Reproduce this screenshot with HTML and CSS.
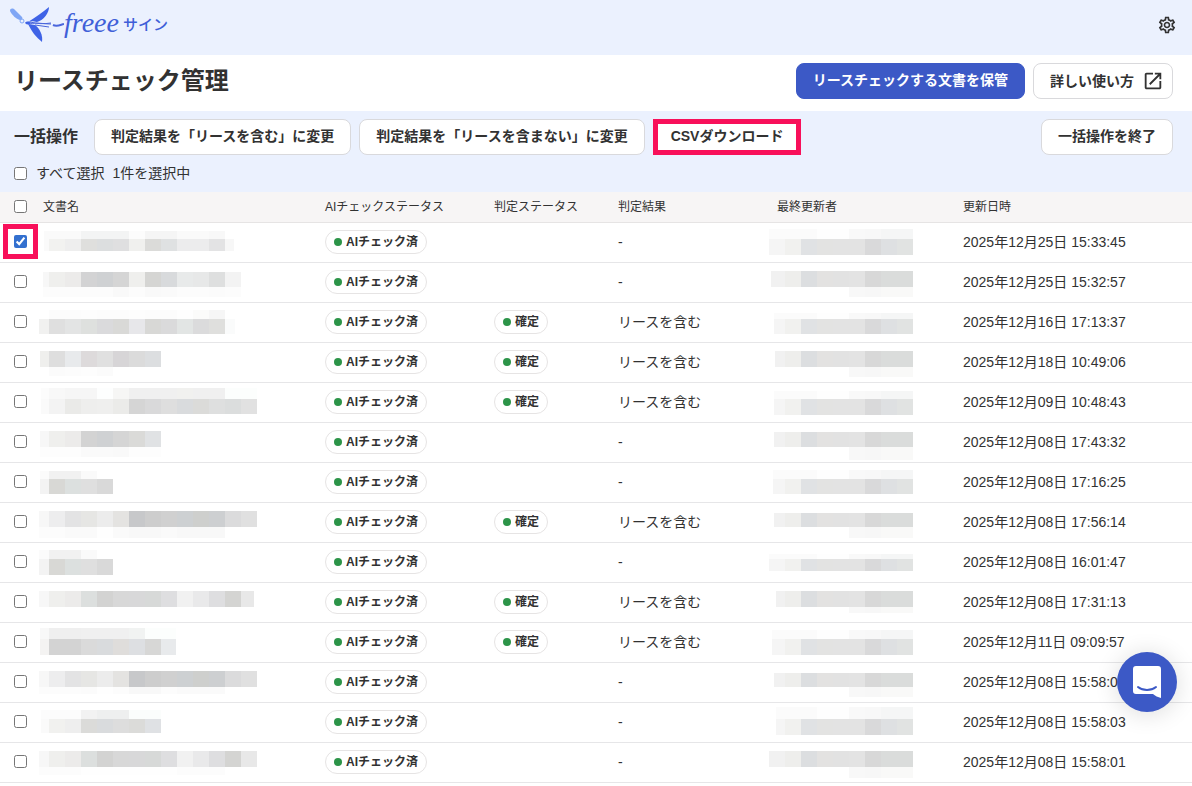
FILE: index.html
```html
<!DOCTYPE html>
<html lang="ja">

<head>
	<meta charset="UTF-8">
	<meta name="viewport" content="width=device-width, initial-scale=1.0">
	<title>リースチェック管理</title>
	<link rel="stylesheet" href="styles.css">
</head>

<body>

	<header class="topbar">
		<a class="logo" href="#">
			<svg class="logo-bird" viewBox="0 0 54 36" aria-hidden="true">
				<path d="M0 4C0 1 3 1 5 3L12 10C13 11 12 13 10 13C6 12 2 8 0 4Z" fill="#7fa6f5" />
				<circle cx="12" cy="14" r="2" fill="none" stroke="#7fa6f5" />
				<path d="M18 15C26 10 33 5 39 0 39 6 34 13 27 15 23 14 21 14 18 15Z" fill="#3f63e6" />
				<path d="M18 17C22 25 26 30 32 35 33 28 30 22 25 18Z" fill="#3f63e6" />
				<path d="M15 16C16 14 19 14 21 16 19 18 17 18 15 16Z" fill="#3f63e6" />
				<path d="M20 15C28 17 34 17 41 16M20 17C26 15 33 17 41 17M25 18L39 20" fill="none" stroke="#4a66dc" />
				<path d="M43 18C47 20 50 18 54 17" fill="none" stroke="#4a66dc" stroke-width="2" />
			</svg>
			<span class="logo-name">freee</span>
			<span class="logo-product">サイン</span>
		</a>
		<button class="icon-button" type="button" aria-label="設定">
			<svg width="20" height="20" viewBox="0 0 24 24" fill="currentColor">
				<path d="M19.43 12.98c.04-.32.07-.64.07-.98 0-.34-.03-.66-.07-.98l2.11-1.65c.19-.15.24-.42.12-.64l-2-3.46c-.09-.16-.26-.25-.44-.25-.06 0-.12.01-.17.03l-2.49 1c-.52-.4-1.08-.73-1.69-.98l-.38-2.65C14.46 2.18 14.25 2 14 2h-4c-.25 0-.46.18-.49.42l-.38 2.65c-.61.25-1.17.59-1.69.98l-2.49-1c-.06-.02-.12-.03-.18-.03-.17 0-.34.09-.43.25l-2 3.46c-.13.22-.07.49.12.64l2.11 1.65c-.04.32-.07.65-.07.98 0 .33.03.66.07.98l-2.11 1.65c-.19.15-.24.42-.12.64l2 3.46c.09.16.26.25.44.25.06 0 .12-.01.17-.03l2.49-1c.52.4 1.08.73 1.69.98l.38 2.65c.03.24.24.42.49.42h4c.25 0 .46-.18.49-.42l.38-2.65c.61-.25 1.17-.59 1.69-.98l2.49 1c.06.02.12.03.18.03.17 0 .34-.09.43-.25l2-3.46c.12-.22.07-.49-.12-.64l-2.11-1.65zm-1.98-1.71c.04.31.05.52.05.73 0 .21-.02.43-.05.73l-.14 1.13.89.7 1.08.84-.7 1.21-1.27-.51-1.04-.42-.9.68c-.43.32-.84.56-1.25.73l-1.06.43-.16 1.13-.2 1.35h-1.4l-.19-1.35-.16-1.13-1.06-.43c-.43-.18-.83-.41-1.23-.71l-.91-.7-1.06.43-1.27.51-.7-1.21 1.08-.84.89-.7-.14-1.13c-.03-.31-.05-.54-.05-.74s.02-.43.05-.73l.14-1.13-.89-.7-1.08-.84.7-1.21 1.27.51 1.04.42.9-.68c.43-.32.84-.56 1.25-.73l1.06-.43.16-1.13.2-1.35h1.39l.19 1.35.16 1.13 1.06.43c.43.18.83.41 1.23.71l.91.7 1.06-.43 1.27-.51.7 1.21-1.07.85-.89.7.14 1.13zM12 8c-2.21 0-4 1.79-4 4s1.79 4 4 4 4-1.79 4-4-1.79-4-4-4zm0 6c-1.1 0-2-.9-2-2s.9-2 2-2 2 .9 2 2-.9 2-2 2z" />
			</svg>
		</button>
	</header>

	<main>
		<div class="page-head">
			<h1 class="page-title">リースチェック管理</h1>
			<div class="page-actions">
				<button class="button button-primary" type="button">リースチェックする文書を保管</button>
				<a class="button button-link" href="#">詳しい使い方
					<svg width="22" height="22" viewBox="0 0 24 24" fill="currentColor" aria-hidden="true">
						<path d="M19 19H5V5h7V3H5c-1.11 0-2 .9-2 2v14c0 1.1.89 2 2 2h14c1.1 0 2-.9 2-2v-7h-2v7zM14 3v2h3.59l-9.83 9.83 1.41 1.41L19 6.41V10h2V3h-7z" />
					</svg>
				</a>
			</div>
		</div>

		<section class="bulk">
			<div class="bulk-row">
				<h2 class="bulk-title">一括操作</h2>
				<div class="bulk-actions">
					<button class="button" type="button">判定結果を「リースを含む」に変更</button>
					<button class="button" type="button">判定結果を「リースを含まない」に変更</button>
					<button class="button button-marked" type="button">CSVダウンロード</button>
				</div>
				<button class="button" type="button">一括操作を終了</button>
			</div>
			<div class="bulk-select">
				<label class="select-all"><input class="check" type="checkbox">すべて選択</label>
				<span>1件を選択中</span>
			</div>
		</section>

		<table class="docs">
			<colgroup>
				<col class="col-check">
				<col class="col-name">
				<col class="col-ai">
				<col class="col-status">
				<col class="col-result">
				<col class="col-user">
				<col>
			</colgroup>
			<thead>
				<tr>
					<th class="cell-check"><input class="check" type="checkbox" aria-label="すべての行を選択"></th>
					<th>文書名</th>
					<th>AIチェックステータス</th>
					<th>判定ステータス</th>
					<th>判定結果</th>
					<th>最終更新者</th>
					<th>更新日時</th>
				</tr>
			</thead>
			<tbody id="docs-body"></tbody>
		</table>
	</main>

	<button class="chat" type="button" aria-label="チャットを開く">
		<svg width="28" height="32" viewBox="0 0 28 32" aria-hidden="true">
			<path d="M3 0h22a3 3 0 0 1 3 3v29c-3-1-6-2-8-4H3a3 3 0 0 1-3-3V3a3 3 0 0 1 3-3z" fill="#fff" />
			<path d="M5 21c5 4 13 4 18 0" fill="none" stroke="#3c59c6" stroke-width="2" stroke-linecap="round" />
		</svg>
	</button>

	<script src="script.js"></script>
</body>

</html>
```

FILE: styles.css
```css
* {
	box-sizing: border-box;
}

body {
	margin: 0;
	background: #fff;
	color: #323232;
	font-family: "Liberation Sans", "Noto Sans CJK JP", sans-serif;
	font-size: 14px;
	line-height: 20px;
}

/* Top bar */
.topbar {
	display: flex;
	align-items: center;
	justify-content: space-between;
	height: 55px;
	padding: 0 15px 6px 10px;
	background: #ebf1fe;
}

.logo {
	display: flex;
	align-items: center;
	color: #3f5fd8;
	text-decoration: none;
}

.logo-bird {
	width: 54px;
	height: 36px;
}

.logo-name {
	padding-bottom: 4px;
	font-family: "Liberation Serif", serif;
	font-size: 28px;
	font-style: italic;
	line-height: 36px;
}

.logo-product {
	margin-left: 4px;
	font-size: 15px;
	font-weight: 500;
}

.icon-button {
	display: flex;
	padding: 0;
	border: 0;
	background: none;
	color: #323232;
}

/* Page heading */
.page-head {
	display: flex;
	align-items: center;
	justify-content: space-between;
	padding: 8px 19px 12px 14px;
}

.page-title {
	margin: 0;
	font-size: 24px;
	line-height: 36px;
}

.page-actions {
	display: flex;
	gap: 8px;
}

.button {
	display: flex;
	align-items: center;
	justify-content: center;
	height: 36px;
	padding: 0 16px 2px;
	border: 1px solid #d9d9dc;
	border-radius: 8px;
	background: #fff;
	color: #323232;
	font-family: inherit;
	font-size: 14px;
	font-weight: bold;
	line-height: 20px;
	text-decoration: none;
	white-space: nowrap;
}

.button-primary {
	border-color: #3c59c6;
	background: #3c59c6;
	color: #fff;
}

.button-link {
	gap: 8px;
	padding: 0 8px 0 16px;
}

.button-marked {
	padding: 0 17px 2px;
	border-radius: 0;
	outline: 5px solid #f8105a;
	outline-offset: -5px;
}

/* Bulk operations */
.bulk {
	padding: 8px 19px 9px 14px;
	background: #ebf1fe;
}

.bulk-row {
	display: flex;
	align-items: center;
	gap: 16px;
}

.bulk-title {
	margin: 0;
	font-size: 16px;
	line-height: 24px;
	white-space: nowrap;
}

.bulk-actions {
	display: flex;
	flex: 1;
	gap: 8px;
}

.bulk-select {
	display: flex;
	gap: 8px;
	margin-top: 8px;
}

.select-all {
	display: flex;
	align-items: center;
	gap: 9px;
}

.check {
	display: block;
	width: 13px;
	height: 13px;
	margin: 0;
	accent-color: #3370cf;
}

/* Document list */
.docs {
	width: 100%;
	border-collapse: separate;
	border-spacing: 0;
	table-layout: fixed;
}

.col-check {
	width: 35px;
}

.col-name {
	width: 282px;
}

.col-ai {
	width: 169px;
}

.col-status {
	width: 124px;
}

.col-result {
	width: 159px;
}

.col-user {
	width: 186px;
}

.docs th {
	height: 31px;
	padding: 0 8px;
	border-bottom: 1px solid #e6e4e4;
	background: #f7f5f5;
	font-size: 12px;
	font-weight: normal;
	text-align: left;
	white-space: nowrap;
}

.docs td {
	height: 40px;
	padding: 0 8px 2px;
	border-bottom: 1px solid #e6e6e8;
	white-space: nowrap;
}

.docs .cell-check {
	padding: 0 0 2px 14px;
}

.docs .cell-masked {
	padding: 0;
}

.mosaic {
	display: block;
	width: 100%;
	height: 39px;
}

.check-wrap {
	display: block;
	position: relative;
	width: 13px;
}

.check-marked::after {
	content: "";
	position: absolute;
	inset: -11px;
	border: 5px solid #f8105a;
	pointer-events: none;
}

.badge {
	display: inline-flex;
	align-items: center;
	gap: 4px;
	height: 24px;
	padding: 0 8px;
	border: 1px solid #e6e4e4;
	border-radius: 12px;
	font-size: 12px;
	font-weight: bold;
	vertical-align: middle;
}

.badge::before {
	content: "";
	width: 8px;
	height: 8px;
	border-radius: 50%;
	background: #2c9448;
}

/* Chat launcher */
.chat {
	display: flex;
	align-items: center;
	justify-content: center;
	position: fixed;
	right: 15px;
	bottom: 74px;
	width: 60px;
	height: 60px;
	padding: 0;
	border: 0;
	border-radius: 50%;
	background: #3c59c6;
	box-shadow: 0 2px 24px rgba(0, 0, 0, 0.14);
}
```

FILE: script.js
```js
// Masked text is drawn as bands of 16px cells: [start, end, top, bottom, colours]
const CELL = 16;

const nameLong = 'f7f7f7 ededee e3e3e4 e6e6e4 ececec e4e3e1 c7c8ca cdcdcd d0d0d0 cdd0d2 cecfcd cdcfd1 dbdbdc e0e0e0';
const nameWide = 'f7f7f7 efefed ecebea dcdfde d3d3d2 d8d8d8 d8d8d9 d7d9d8 dedee0 f1f1f1 e9e9ea dedee0 d4d4d2 e8e8e8';
const nameShort = 'f3f3f3 d8d8d5 dce0df dfdfdf d9d9d9';
const userHigh = 'f1f1f1 eeeeec dcdee0 e3e2e1 e2e2e2 e3e3e3 d8d8d8 dadcdb dadcdb';
const userLow = 'f5f5f5 f1f1ef e0e2e4 e3e3e2 e3e3e3 e3e3e3 d9d9da dee0e2 e1e3e2';

// user: [start, top, middle, bottom], low = the dark band is the lower one
const docs = [
	{
		date: '2025年12月25日 15:33:45', checked: true, user: [0, 6, 16, 32], low: true,
		name: [[9, 190, 8, 16, 'fafafa fafafa fafafa f3f4f4 f3f4f4 f3f4f4 fcfcfc f5f5f5 f5f5f5 fafafa fafafa f8f8f8'],
		[9, 199, 16, 28, 'fafafa f2f2f0 eeeeee dfdfdd dcdedf dfdfe0 f0f0ee dbdbd9 dfe1e2 ececed ececed e3e3e4 f7f7f7']]
	},
	{
		date: '2025年12月25日 15:32:57', user: [2, 8, 24, 34],
		name: [[8, 206, 9, 24, 'f7f7f7 efefed ecebea d3d3d4 cfd1d3 d5d5d5 efefed d5d5d3 d8dadc e8eaea e7e8e8 dedfdf f3f3f3'],
		[8, 206, 24, 34, 'fcfcfc fcfcfc fcfcfc fcfcfc fcfcfc f9f9f9 fcfcfc f9f9f9 fafafa fcfcfc fcfcfc fbfbfb fcfcfc']]
	},
	{
		date: '2025年12月16日 17:13:37', fixed: true, user: [5, 10, 16, 31], low: true,
		name: [[14, 190, 7, 16, 'fcfcfc fcfcfc fdfdfd fcfcfc fcfcfc fdfdfd fcfcfc fcfcfc fefefe fbfbfa f6f6f6'],
		[4, 200, 16, 31, 'f1f1f0 dfdfdf e3e4e4 dee0de dadadc d9d9d7 e7e7ea d8d8d6 dadadb e2e5e4 dbdbdc dfdfdd fafbfb']]
	},
	{
		date: '2025年12月18日 10:49:06', fixed: true, user: [6, 8, 24, 34],
		name: [[5, 126, 8, 24, 'efefed dedede e8eaec dddadb e0e0e0 d7d5d7 dbdbdb dcdee0'],
		[14, 78, 24, 33, 'fbfbfb fcfcfc fdfdfd fbfbfb']]
	},
	{
		date: '2025年12月09日 10:48:43', fixed: true, user: [5, 8, 16, 32], low: true,
		name: [[6, 222, 5, 16, 'fcfcfc f8f8f8 f6f6f6 f6f6f6 fdfefe f6f6f5 f0f0f0 f0f0f0 f0f0f0 f1f1ef f0f0f0 f0f0f0 fcfefd fcfefd'],
		[6, 222, 16, 31, 'fafafa f3f3f3 eaeae8 eeeeed efefee ebebe9 d5d5d5 d9d9da dedede d9dbdd dbdbd9 dedfdf dbdddd e1e1e1']]
	},
	{
		date: '2025年12月08日 17:43:32', user: [5, 9, 24, 37],
		name: [[5, 126, 8, 24, 'f7f7f7 efefed ecebea d3d3d3 cfd1d3 d5d5d5 dadad8 e0e2e4'],
		[5, 126, 24, 34, 'fdfdfd fdfdfd fdfdfd fafafa fafafa f9f9f9 fdfdfd fdfdfd']]
	},
	{
		date: '2025年12月08日 17:16:25', user: [4, 7, 16, 31], low: true,
		name: [[5, 62, 8, 16, 'fbfbfb f1f1f1 f1f1f1 fafafa'], [5, 78, 16, 31, nameShort]]
	},
	{
		date: '2025年12月08日 17:56:14', fixed: true, user: [5, 10, 24, 35],
		name: [[4, 222, 8, 24, nameLong],
		[4, 190, 24, 35, 'fcfcfc fcfcfc fafafa fafafa fefefe fafafa f8f8f8 f8f8f8 fafafa f8f8f8 f8f8f8 f8f8f8']]
	},
	{
		date: '2025年12月08日 16:01:47', user: [0, 11, 16, 28], low: true,
		name: [[4, 62, 7, 16, 'fbfbfb f1f1f1 f1f1f1 fafafa'], [4, 78, 16, 32, nameShort]]
	},
	{
		date: '2025年12月08日 17:31:13', fixed: true, user: [7, 8, 24, 30],
		name: [[4, 219, 8, 24, nameWide]]
	},
	{
		date: '2025年12月11日 09:09:57', fixed: true, user: [3, 7, 16, 32], low: true,
		name: [[5, 141, 5, 16, 'f8f8f8 efefef efefef f0f0f0 f0f0f0 f0f0f0 f1f3f2 fcfefd fcfefd'],
		[5, 141, 16, 32, 'f4f3f2 d3d3d3 d3d3d3 dadada d9dbdd dfdddb dddfe2 d7d7d6 e8eaec']]
	},
	{
		date: '2025年12月08日 15:58:03', user: [5, 10, 24, 34],
		name: [[4, 222, 8, 24, nameLong],
		[4, 190, 24, 31, 'fcfcfc fcfcfc fcfcfc fbfbfb fefefe fcfcfc f8f8f8 f8f8f8 fcfcfc fafafa fafafa fafafa']]
	},
	{
		date: '2025年12月08日 15:58:03', user: [7, 4, 16, 32], low: true,
		name: [[6, 126, 7, 16, 'fcfcfc fcfcfc fcfcfc f2f2f2 eeefef eeefef fbfdfc fbfdfc'],
		[6, 126, 16, 30, 'fafafa f1f1ef eeeeee dbdbd9 d9dbdd dddddd dbdbd9 dfe1e4']]
	},
	{
		date: '2025年12月08日 15:58:01', user: [0, 8, 24, 35],
		name: [[4, 222, 8, 24, nameWide],
		[4, 190, 24, 32, 'fcfcfc fcfcfc fcfcfc fefefe fefefe fefefe fefefe fefefe fefefe fcfcfc fcfcfc fcfcfc']]
	}
];

function userBands([start, top, middle, bottom], low) {
	if (low) {
		return [
			[start, 144, top, middle, 'fbfbfb fbfbfb fbfbfb fefefe fefefe f9f9f9 f8f8f8 f5f6f6 f5f6f6'],
			[start, 144, middle, bottom, userLow]
		];
	}
	return [
		[start, 144, top, middle, userHigh],
		[80, 144, middle, bottom, 'f8f8f8 f7f7f7 f9f9f8 f9f9f8']
	];
}

// firstEdge is where the first cell ends; the others follow every 16px
function mosaic(bands, firstEdge) {
	let rects = '';
	bands.forEach(([start, end, top, bottom, colours]) => {
		let x = start;
		let edge = firstEdge;
		while (edge <= start) {
			edge += CELL;
		}
		colours.split(' ').forEach((colour) => {
			const right = Math.min(edge, end);
			rects += `<rect x="${x}" y="${top}" width="${right - x}" height="${bottom - top}" fill="#${colour}"/>`;
			x = right;
			edge += CELL;
		});
	});
	return `<svg class="mosaic" shape-rendering="crispEdges" aria-hidden="true">${rects}</svg>`;
}

document.getElementById('docs-body').innerHTML = docs.map((doc) => `
	<tr>
		<td class="cell-check">
			<span class="check-wrap${doc.checked ? ' check-marked' : ''}">
				<input class="check" type="checkbox" aria-label="行を選択"${doc.checked ? ' checked' : ''}>
			</span>
		</td>
		<td class="cell-masked">${mosaic(doc.name, 14)}</td>
		<td><span class="badge">AIチェック済</span></td>
		<td>${doc.fixed ? '<span class="badge">確定</span>' : ''}</td>
		<td>${doc.fixed ? 'リースを含む' : '-'}</td>
		<td class="cell-masked">${mosaic(userBands(doc.user, doc.low), 16)}</td>
		<td>${doc.date}</td>
	</tr>`).join('');
```
